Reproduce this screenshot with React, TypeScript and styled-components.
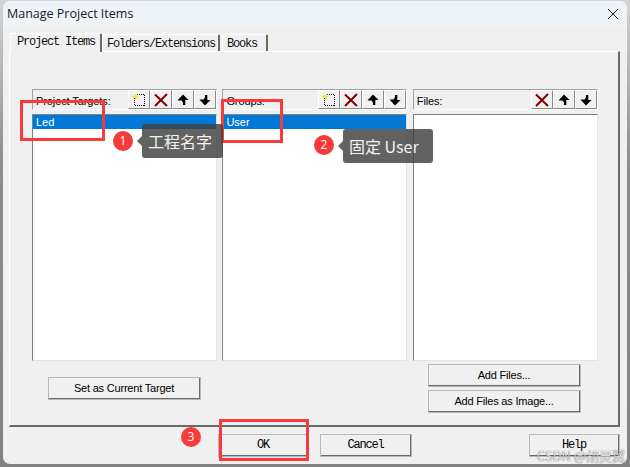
import styled, { createGlobalStyle } from 'styled-components'

const GlobalStyle = createGlobalStyle`
  html, body {
    margin: 0;
    padding: 0;
    background: #ffffff;
  }
`

const Page = styled.div`
  position: relative;
  box-sizing: border-box;
  width: 630px;
  height: 467px;
  padding: 1px 0 0 3px;
  background: linear-gradient(#d4d4d4, #8c8c8c 35%, #828282);
  overflow: hidden;
`

const Dialog = styled.div`
  box-sizing: border-box;
  width: 624px;
  height: 463px;
  border-radius: 7px;
  background: #f0f0f0;
  display: flex;
  flex-direction: column;
  overflow: hidden;
`

const TitleBar = styled.div`
  flex: 0 0 25px;
  display: flex;
  align-items: center;
  justify-content: space-between;
  padding: 0 6px 0 4px;
  background: #eef2f9;
  font-family: 'Open Sans', 'Liberation Sans', sans-serif;
  font-size: 12.5px;
  color: #1a1a1a;
`

const Close = styled.svg`
  width: 12px;
  height: 12px;
  margin-right: 2px;
`

const Body = styled.div`
  flex: 1;
  display: flex;
  flex-direction: column;
  padding: 6px 0 0 6px;
`

const TabStrip = styled.div`
  display: flex;
  align-items: flex-end;
  height: 19px;
  padding-left: 1px;
`

const Tab = styled.div<{ $active?: boolean; $width: number }>`
  box-sizing: border-box;
  width: ${(p) => p.$width}px;
  height: ${(p) => (p.$active ? 19 : 17)}px;
  margin-bottom: ${(p) => (p.$active ? -1 : 0)}px;
  padding-left: ${(p) => (p.$active ? 6 : 4)}px;
  padding-top: ${(p) => (p.$active ? 1 : 2)}px;
  background: #f0f0f0;
  border-top: 1px solid #ffffff;
  border-left: 1px solid #ffffff;
  border-right: 2px solid #6a6a6a;
  border-radius: 2px 2px 0 0;
  position: relative;
  font-family: 'Liberation Mono', monospace;
  font-size: 12px;
  letter-spacing: -1.2px;
  line-height: 14px;
  color: #111111;
  white-space: nowrap;

  &:last-child {
    margin-left: 2px;
  }
`

const Panel = styled.div`
  box-sizing: border-box;
  width: 611px;
  height: 376px;
  border-top: 1px solid #ffffff;
  border-left: 1px solid #ffffff;
  border-right: 2px solid #6a6a6a;
  border-bottom: 2px solid #6a6a6a;
  padding: 37px 0 0 22px;
`

const Columns = styled.div`
  display: grid;
  grid-template-columns: repeat(3, 185px);
  column-gap: 5.4px;
`

const Column = styled.div`
  display: flex;
  flex-direction: column;
`

const Header = styled.div`
  box-sizing: border-box;
  height: 21px;
  display: flex;
  align-items: center;
  justify-content: space-between;
  border-top: 1px solid #a0a0a0;
  border-left: 1px solid #a0a0a0;
  border-right: 1px solid #ffffff;
  border-bottom: 1px solid #ffffff;
  padding-left: 3px;
`

const HeaderLabel = styled.span`
  padding-top: 2px;
  font-family: 'Liberation Sans', Arial, sans-serif;
  font-size: 11px;
  letter-spacing: -0.1px;
  color: #000000;
  white-space: nowrap;
`

const Tools = styled.div`
  display: flex;
`

const ToolButton = styled.div`
  box-sizing: border-box;
  width: 22px;
  height: 19px;
  display: flex;
  align-items: center;
  justify-content: center;
  background: #f0f0f0;
  border-top: 1px solid #ffffff;
  border-left: 1px solid #ffffff;
  border-right: 1px solid #8a8a8a;
  border-bottom: 1px solid #8a8a8a;
`

const List = styled.div`
  box-sizing: border-box;
  height: 247px;
  margin-top: 4px;
  background: #ffffff;
  border-top: 1px solid #808080;
  border-left: 1px solid #808080;
  border-right: 1px solid #e4e4e4;
  border-bottom: 1px solid #e4e4e4;
`

const Row = styled.div`
  height: 14px;
  padding-left: 3px;
  background: #0078d7;
  color: #ffffff;
  font-family: 'Liberation Sans', Arial, sans-serif;
  font-size: 11px;
  line-height: 14px;
`

const ActionArea = styled.div`
  display: flex;
  justify-content: space-between;
  align-items: flex-start;
  padding: 3px 0 0 16px;
  width: 533px;
`

const Stack = styled.div<{ $offset?: number }>`
  display: flex;
  flex-direction: column;
  gap: 3px;
  margin-top: ${(p) => p.$offset ?? 0}px;
`

const Button = styled.div<{ $width?: number; $gap?: number; $mono?: boolean }>`
  box-sizing: border-box;
  width: ${(p) => p.$width ?? 153}px;
  height: 23px;
  margin-left: ${(p) => p.$gap ?? 0}px;
  display: flex;
  align-items: center;
  justify-content: center;
  background: #f0f0f0;
  border-top: 1px solid #ffffff;
  border-left: 1px solid #ffffff;
  border-right: 2px solid #6a6a6a;
  border-bottom: 2px solid #6a6a6a;
  outline: 1px solid #b8b8b8;
  outline-offset: -1px;
  font-family: ${(p) => (p.$mono ? "'Liberation Mono', monospace" : "'Liberation Sans', Arial, sans-serif")};
  font-size: ${(p) => (p.$mono ? 12 : 11)}px;
  letter-spacing: ${(p) => (p.$mono ? -1.2 : -0.2)}px;
  color: #000000;
`

const Footer = styled.div`
  display: flex;
  padding: 7px 0 0 209px;
`

const Marker = styled.div<{ $left: number; $top: number; $width: number; $height: number }>`
  position: absolute;
  box-sizing: border-box;
  left: ${(p) => p.$left}px;
  top: ${(p) => p.$top}px;
  width: ${(p) => p.$width}px;
  height: ${(p) => p.$height}px;
  border: 3px solid #f73a3a;
`

const Badge = styled.div<{ $left: number; $top: number }>`
  position: absolute;
  left: ${(p) => p.$left}px;
  top: ${(p) => p.$top}px;
  width: 20px;
  height: 20px;
  border-radius: 50%;
  background: #f73a3a;
  color: #ffffff;
  font-family: 'Open Sans', 'Liberation Sans', sans-serif;
  font-size: 12px;
  line-height: 20px;
  text-align: center;
`

const Note = styled.div<{ $left: number; $top: number; $width: number }>`
  position: absolute;
  box-sizing: border-box;
  left: ${(p) => p.$left}px;
  top: ${(p) => p.$top}px;
  width: ${(p) => p.$width}px;
  height: 34px;
  padding-left: 6px;
  border-radius: 3px;
  background: rgba(64, 64, 64, 0.82);
  color: #f2f2f2;
  font-family: 'Noto Sans CJK SC', 'Noto Sans', sans-serif;
  font-size: 16px;
  line-height: 34px;
  white-space: nowrap;

  &::before {
    content: '';
    position: absolute;
    left: -5px;
    top: 12px;
    border-top: 5px solid transparent;
    border-bottom: 5px solid transparent;
    border-right: 5px solid rgba(64, 64, 64, 0.82);
  }
`

const Watermark = styled.div`
  position: absolute;
  right: 5px;
  bottom: 4px;
  font-family: 'Noto Sans CJK SC', 'Liberation Sans', sans-serif;
  font-size: 13px;
  line-height: 14px;
  color: rgba(255, 255, 255, 0.85);
  text-shadow: 0 0 1px rgba(0, 0, 0, 0.8);
  white-space: nowrap;
`

const NewIcon = () => (
  <svg width="16" height="15" viewBox="0 0 16 15" shapeRendering="crispEdges">
    <rect x="3.5" y="2.5" width="10" height="11" fill="none" stroke="#000" strokeDasharray="1 1" />
    <path d="M4 1.5v6M1 4.5h6" stroke="#f2e52a" strokeWidth="1" />
    <path d="M2 2.5l4 4M6 2.5l-4 4" stroke="#f2e52a" strokeWidth="1" shapeRendering="auto" />
  </svg>
)

const DeleteIcon = () => (
  <svg width="14" height="14" viewBox="0 0 14 14">
    <path d="M1 1.5L13 13M13 1L1 13" stroke="#860000" strokeWidth="2" />
  </svg>
)

const UpIcon = () => (
  <svg width="12" height="12" viewBox="0 0 13 13">
    <path d="M6.5 0.5L12.5 6.5H9V12H6.5V9.5L5 7H0.5Z" fill="#000" />
  </svg>
)

const DownIcon = () => (
  <svg width="12" height="12" viewBox="0 0 13 13">
    <path d="M6.5 12.5L12.5 6.5H9V1H6.5V3.5L5 6H0.5Z" fill="#000" />
  </svg>
)

const Toolbar = ({ withNew = true }: { withNew?: boolean }) => (
  <Tools>
    {withNew && (
      <ToolButton>
        <NewIcon />
      </ToolButton>
    )}
    <ToolButton>
      <DeleteIcon />
    </ToolButton>
    <ToolButton>
      <UpIcon />
    </ToolButton>
    <ToolButton>
      <DownIcon />
    </ToolButton>
  </Tools>
)

export default function App() {
  return (
    <Page>
      <GlobalStyle />
      <Dialog>
        <TitleBar>
          Manage Project Items
          <Close viewBox="0 0 12 12">
            <path d="M1 1L11 11M11 1L1 11" stroke="#222" strokeWidth="1" />
          </Close>
        </TitleBar>
        <Body>
          <TabStrip>
            <Tab $active $width={92}>Project Items</Tab>
            <Tab $width={118}>Folders/Extensions</Tab>
            <Tab $width={46}>Books</Tab>
          </TabStrip>
          <Panel>
            <Columns>
              <Column>
                <Header>
                  <HeaderLabel>Project Targets:</HeaderLabel>
                  <Toolbar />
                </Header>
                <List>
                  <Row>Led</Row>
                </List>
              </Column>
              <Column>
                <Header>
                  <HeaderLabel>Groups:</HeaderLabel>
                  <Toolbar />
                </Header>
                <List>
                  <Row>User</Row>
                </List>
              </Column>
              <Column>
                <Header>
                  <HeaderLabel>Files:</HeaderLabel>
                  <Toolbar withNew={false} />
                </Header>
                <List />
              </Column>
            </Columns>
            <ActionArea>
              <Stack $offset={13}>
                <Button>Set as Current Target</Button>
              </Stack>
              <Stack>
                <Button>Add Files...</Button>
                <Button>Add Files as Image...</Button>
              </Stack>
            </ActionArea>
          </Panel>
          <Footer>
            <Button $mono $width={91}>OK</Button>
            <Button $mono $width={92} $gap={11}>Cancel</Button>
            <Button $mono $width={91} $gap={117}>Help</Button>
          </Footer>
        </Body>
      </Dialog>
      <Marker $left={20} $top={100} $width={85} $height={41} />
      <Marker $left={221} $top={99} $width={62} $height={44} />
      <Marker $left={219} $top={419} $width={90} $height={42} />
      <Badge $left={113} $top={131}>1</Badge>
      <Note $left={142} $top={124} $width={81}>工程名字</Note>
      <Badge $left={314} $top={135}>2</Badge>
      <Note $left={343} $top={129} $width={90}>固定 User</Note>
      <Badge $left={181} $top={427}>3</Badge>
      <Watermark>CSDN @胡灵翼</Watermark>
    </Page>
  )
}
